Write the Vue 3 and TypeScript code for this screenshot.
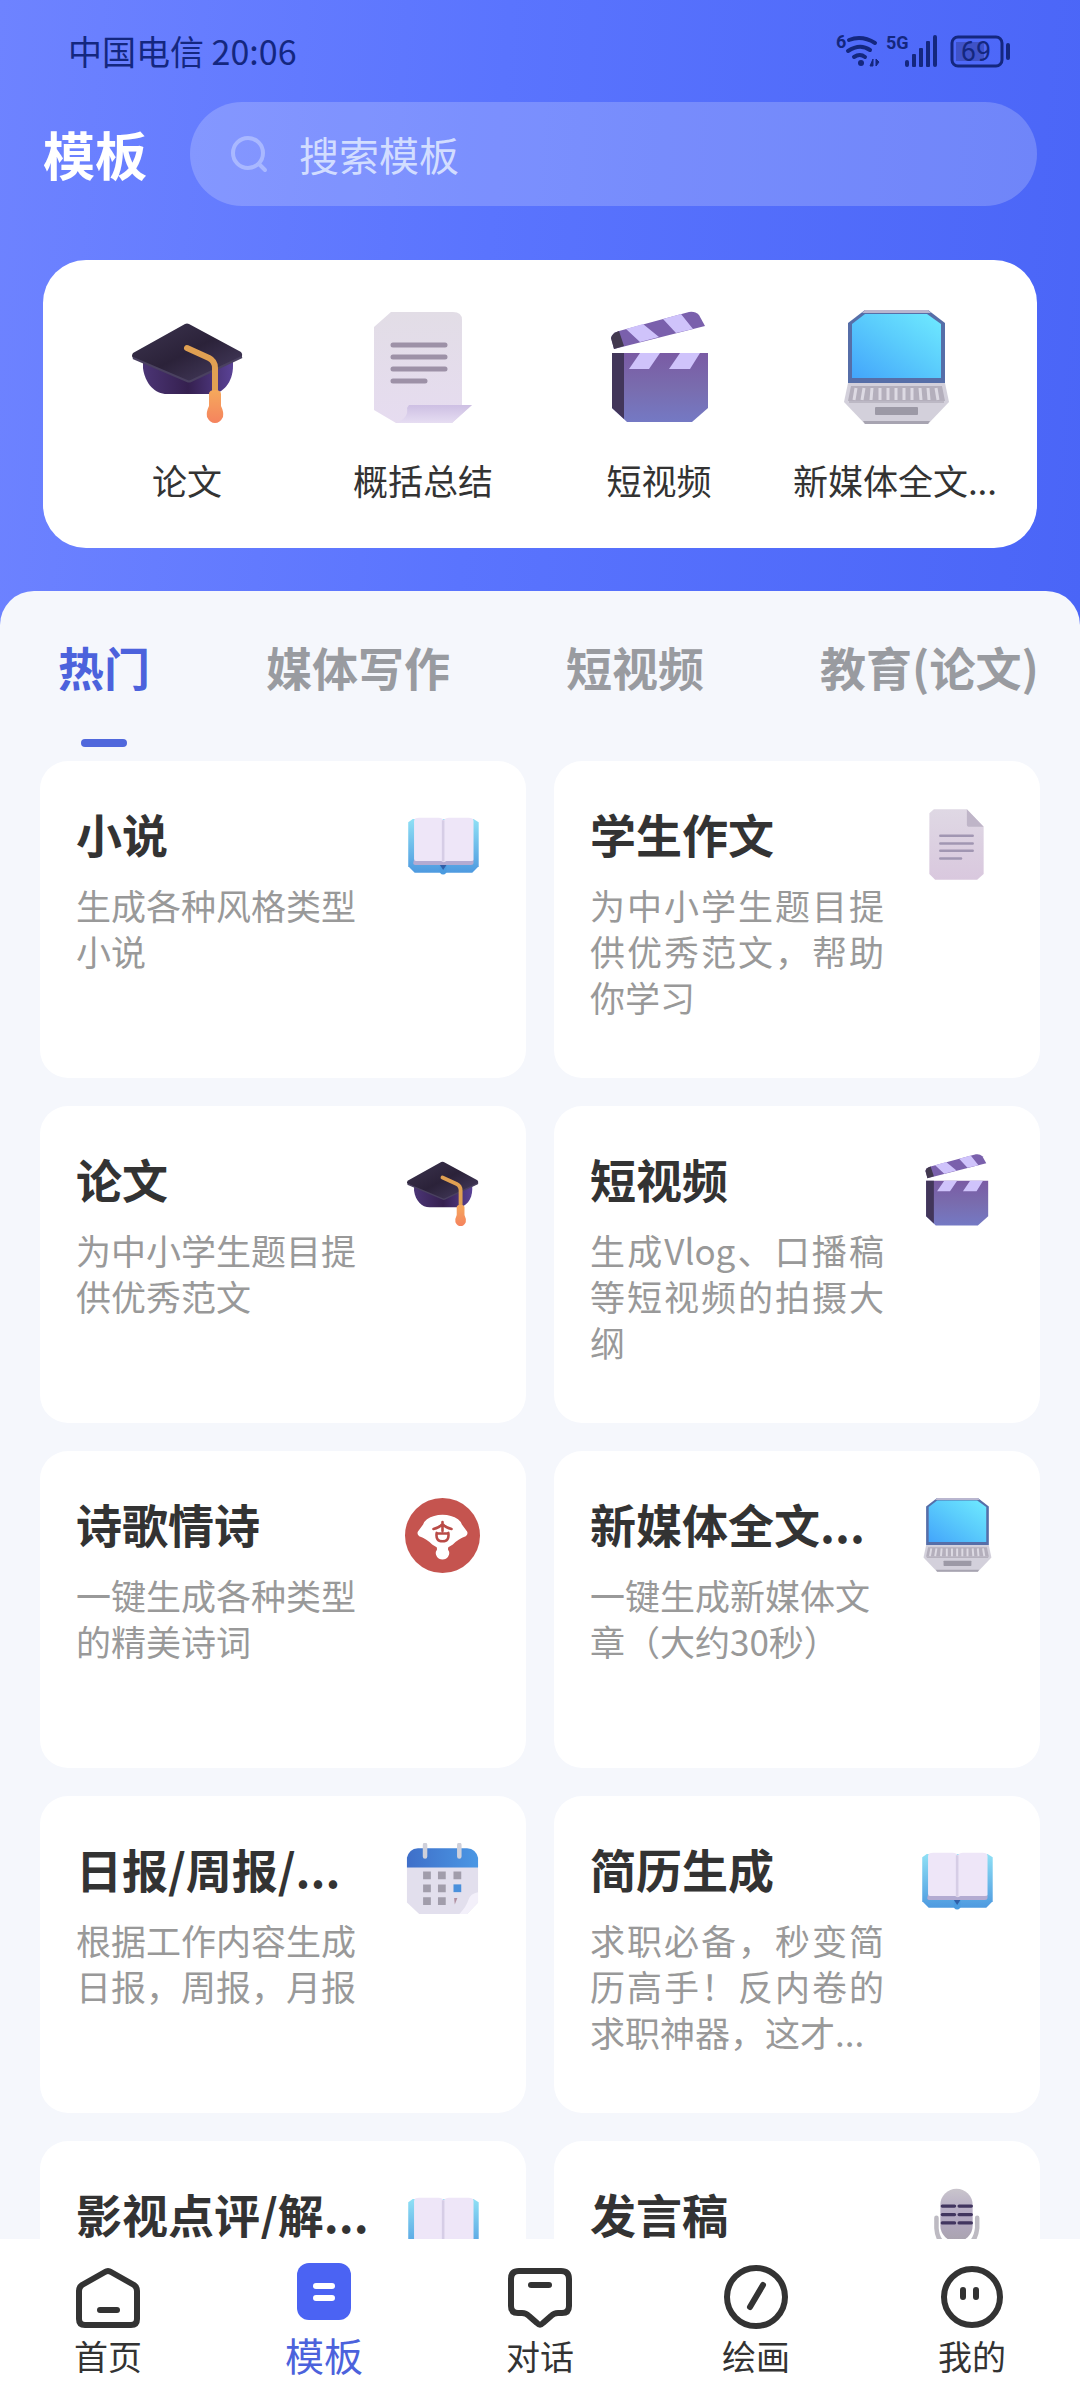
<script setup lang="ts">
import { ref } from 'vue'

interface Shortcut {
  label: string
  icon: string
}

interface Template {
  title: string
  desc: string
  icon: string
  wide?: boolean
}

interface NavItem {
  label: string
  icon: 'home' | 'template' | 'chat' | 'paint' | 'mine'
}

const keyword = ref('')
const activeTab = ref('热门')
const activeNav = ref('模板')

const shortcuts: Shortcut[] = [
  { label: '论文', icon: 'cap' },
  { label: '概括总结', icon: 'scroll' },
  { label: '短视频', icon: 'clapper' },
  { label: '新媒体全文...', icon: 'laptop' },
]

const tabs: string[] = ['热门', '媒体写作', '短视频', '教育(论文)']

const templates: Template[] = [
  { title: '小说', desc: '生成各种风格类型小说', icon: 'book' },
  { title: '学生作文', desc: '为中小学生题目提供优秀范文，帮助你学习', icon: 'doc', wide: true },
  { title: '论文', desc: '为中小学生题目提供优秀范文', icon: 'cap' },
  { title: '短视频', desc: '生成Vlog、口播稿等短视频的拍摄大纲', icon: 'clapper', wide: true },
  { title: '诗歌情诗', desc: '一键生成各种类型的精美诗词', icon: 'fan' },
  { title: '新媒体全文...', desc: '一键生成新媒体文章（大约30秒）', icon: 'laptop' },
  { title: '日报/周报/...', desc: '根据工作内容生成日报，周报，月报', icon: 'calendar' },
  { title: '简历生成', desc: '求职必备，秒变简历高手！反内卷的求职神器，这才...', icon: 'book', wide: true },
  { title: '影视点评/解...', desc: '', icon: 'book' },
  { title: '发言稿', desc: '', icon: 'mic' },
]

const navItems: NavItem[] = [
  { label: '首页', icon: 'home' },
  { label: '模板', icon: 'template' },
  { label: '对话', icon: 'chat' },
  { label: '绘画', icon: 'paint' },
  { label: '我的', icon: 'mine' },
]
</script>

<template>
  <div class="app">
    <svg class="sprite" width="0" height="0" aria-hidden="true">
      <defs>
        <linearGradient id="g-cap" x1="0" y1="0" x2="1" y2="1">
          <stop offset="0" stop-color="#3d3550" />
          <stop offset="0.5" stop-color="#2b2239" />
          <stop offset="1" stop-color="#493f63" />
        </linearGradient>
        <linearGradient id="g-skull" x1="0" y1="0" x2="1" y2="0">
          <stop offset="0" stop-color="#4b3575" />
          <stop offset="0.5" stop-color="#35204f" />
          <stop offset="1" stop-color="#5a4296" />
        </linearGradient>
        <linearGradient id="g-tassel" x1="0" y1="0" x2="0" y2="1">
          <stop offset="0" stop-color="#f5a95c" />
          <stop offset="1" stop-color="#f5835e" />
        </linearGradient>
        <linearGradient id="g-paper" x1="0" y1="0" x2="0" y2="1">
          <stop offset="0" stop-color="#e2dde6" />
          <stop offset="1" stop-color="#e6dcf0" />
        </linearGradient>
        <linearGradient id="g-roll" x1="0" y1="0" x2="0" y2="1">
          <stop offset="0" stop-color="#cdbfe3" />
          <stop offset="1" stop-color="#e6ddf2" />
        </linearGradient>
        <linearGradient id="g-clap" x1="0" y1="0" x2="0" y2="1">
          <stop offset="0" stop-color="#7a5ba4" />
          <stop offset="0.5" stop-color="#796cae" />
          <stop offset="1" stop-color="#7479c4" />
        </linearGradient>
        <linearGradient id="g-screen" x1="0" y1="1" x2="1" y2="0">
          <stop offset="0" stop-color="#43a5fb" />
          <stop offset="0.55" stop-color="#5bcdfc" />
          <stop offset="1" stop-color="#6feaff" />
        </linearGradient>
        <linearGradient id="g-cover" x1="0" y1="0" x2="0" y2="1">
          <stop offset="0" stop-color="#8fe0f5" />
          <stop offset="1" stop-color="#4e9ae0" />
        </linearGradient>
        <linearGradient id="g-doc" x1="0" y1="0" x2="0" y2="1">
          <stop offset="0" stop-color="#dfd8e4" />
          <stop offset="1" stop-color="#d9c8de" />
        </linearGradient>
        <linearGradient id="g-cal" x1="0" y1="0" x2="1" y2="0">
          <stop offset="0" stop-color="#3f6fc9" />
          <stop offset="1" stop-color="#4a97e4" />
        </linearGradient>
        <linearGradient id="g-mic" x1="0" y1="0" x2="0" y2="1">
          <stop offset="0" stop-color="#c9c5cc" />
          <stop offset="0.5" stop-color="#b4a9c4" />
          <stop offset="1" stop-color="#a9a3ae" />
        </linearGradient>
      </defs>

      <symbol id="cap" viewBox="0 0 116 116">
        <path d="M14 50V58C16 74 26 84 38 84H82C94 84 104 72 104 56V48Z" fill="url(#g-skull)" />
        <path d="M56 14Q58 13 60 14L112 42Q114 44 113 47L62 71Q60 72 58 71L4 48Q2 46 4 43Z" fill="url(#g-cap)" />
        <path d="M4 48L58 71Q60 72 62 71L113 47" fill="none" stroke="#4a4160" stroke-width="2" />
        <path d="M58 38L80 48Q86 51 86 58V86" fill="none" stroke="#e0a052" stroke-width="6" stroke-linecap="round" stroke-linejoin="round" />
        <path d="M80 84Q80 80 86 80T92 84V96Q95 102 94 107Q91 113 86 113T78 107Q77 102 80 96Z" fill="url(#g-tassel)" />
      </symbol>

      <symbol id="scroll" viewBox="0 0 116 116">
        <path d="M26 2H88Q97 2 97 10V95H107L87 113H31L9 100V17Z" fill="url(#g-paper)" />
        <path d="M44 95H107L87 113H31Q44 108 42 98Z" fill="url(#g-roll)" />
        <path d="M28 35H80M28 47H80M28 59H80M28 71H60" stroke="#9d91a7" stroke-width="5" stroke-linecap="round" />
      </symbol>

      <symbol id="clapper" viewBox="0 0 116 116">
        <path d="M10 28Q11 23 18 21L88 2Q94 1 98 5L104 16L13 39Z" fill="#7a60ac" />
        <path d="M10 28Q11 23 18 21L23 36L13 39Z" fill="#42394f" />
        <path d="M25 19L42 14L58 27L39 32ZM62 9L80 4L92 19L75 23Z" fill="#cfc3fb" />
        <path d="M11 43H107V98L91 112H26L11 98Z" fill="url(#g-clap)" />
        <path d="M11 43H23V109L11 98Z" fill="#42365a" />
        <path d="M39 43H59L48 59H28ZM79 43H99L89 59H68Z" fill="#cfc3fb" />
      </symbol>

      <symbol id="laptop" viewBox="0 0 116 116">
        <path d="M28 0H91L108 13V73H11V13Z" fill="#566ea8" />
        <path d="M28 0H91L94 3H25Z" fill="#b9b6cf" />
        <path d="M28 4H90L104 14V68H15V14Z" fill="url(#g-screen)" />
        <path d="M11 73H108L112 92L91 114H28L7 92Z" fill="#d3d0db" />
        <path d="M14 76H105L108 91H11Z" fill="#b4afbc" />
        <path d="M19 78L17 90M27 78L25 90M35 78L34 90M43 78V90M51 78V90M59 78V90M67 78V90M75 78V90M83 78L84 90M91 78L92 90M99 78L101 90" stroke="#dddae3" stroke-width="3" />
        <path d="M12 92H107" stroke="#a5a0ae" stroke-width="1" />
        <rect x="38" y="97" width="43" height="8" rx="1" fill="#9c99a6" />
        <path d="M26 111H93L91 114H28Z" fill="#a7a4b1" />
      </symbol>

      <symbol id="book" viewBox="0 0 116 116">
        <path d="M5 22L12 17H106L114 22V90L104 100H15L5 90Z" fill="url(#g-cover)" />
        <path d="M14 80H106V85Q106 88 102 88H64L59 91L54 88H16Q12 88 13 84Z" fill="#b3abd2" />
        <path d="M14 20Q14 15 22 15H52Q58 15 60 19Q62 15 68 15H98Q106 15 106 20V80Q106 82 102 82H64L60 84L56 82H17Q14 82 14 79Z" fill="#eee6f8" />
        <path d="M59 19V83" stroke="#d6cde6" stroke-width="4" />
        <path d="M54 88H64V100Q59 106 54 100Z" fill="#4a9be0" />
        <path d="M54 88H64L59 96Z" fill="#2f5fa8" />
      </symbol>

      <symbol id="doc" viewBox="0 0 116 116">
        <path d="M23 2H74L100 29V102L90 111H25L16 102V8Z" fill="url(#g-doc)" />
        <path d="M74 2L100 29H78Q74 29 74 25Z" fill="#bfb5c8" />
        <path d="M33 43H83M33 55H83M33 66H83M33 78H65" stroke="#a196b2" stroke-width="4" stroke-linecap="round" />
      </symbol>

      <symbol id="fan" viewBox="0 0 116 116">
        <circle cx="58" cy="58" r="58" fill="#c5544f" />
        <path d="M58 26Q72 26 82 33Q86 36 88 41L96 52Q98 56 94 59Q82 63 74 72Q70 75 67 76Q66 79 67 81Q70 85 67 90Q64 95 58 95T49 90Q46 85 49 81Q50 79 49 76Q46 75 42 72Q34 63 22 59Q18 56 20 52L28 41Q30 36 34 33Q44 26 58 26Z" fill="#fff" />
        <path d="M58 37V51M44 48Q53 46 58 40Q63 46 72 48M49 54Q47 67 58 67T67 54M50 55H66" fill="none" stroke="#b94b47" stroke-width="4" stroke-linecap="round" />
      </symbol>

      <symbol id="calendar" viewBox="0 0 116 116">
        <path d="M3 32H113V92L96 110H22L3 92Z" fill="#e2dfed" />
        <path d="M96 110L113 92V76Q101 78 98 88T84 110Z" fill="#f3f0fa" />
        <path d="M3 38V23Q6 9 20 8H96Q110 9 113 23V38Z" fill="url(#g-cal)" />
        <path d="M31 3V21M84 3V21" stroke="#cfd0da" stroke-width="7" stroke-linecap="round" />
        <path d="M28 44H40V56H28ZM51 44H63V56H51ZM75 44H87V56H75ZM28 64H40V76H28ZM51 64H63V76H51ZM28 84H40V96H28ZM51 84H63V96H51Z" fill="#a19dab" />
        <path d="M75 64H87V76H75Z" fill="#4a90dc" />
        <path d="M76 85H81L77 95Z" fill="#b08fa0" />
      </symbol>

      <symbol id="mic" viewBox="0 0 116 116">
        <path d="M27 46V62Q29 92 58 92T90 62V46" fill="none" stroke="#bdbac2" stroke-width="7" stroke-linecap="round" />
        <path d="M58 92V112M38 113H78" stroke="#a9a3ae" stroke-width="7" />
        <rect x="33" y="1" width="50" height="82" rx="25" fill="url(#g-mic)" />
        <path d="M36 28H55M62 28H81M36 41H55M62 41H81M36 54H55M62 54H81" stroke="#41355f" stroke-width="5" stroke-linecap="round" />
      </symbol>
    </svg>

    <header class="top">
      <div class="status">
        <span>中国电信 20:06</span>
        <svg class="status-icons" viewBox="0 0 178 36" aria-hidden="true">
          <g fill="none" stroke="#14277f" stroke-linecap="round" stroke-width="4">
            <path d="M15 7Q28 2 41 10" />
            <path d="M14 18Q26 10 36 17" />
            <path d="M20 24Q26 20 31 24" />
          </g>
          <circle cx="27" cy="30" r="3" fill="#14277f" />
          <path d="M39 26V33H36ZM42 33V26L45 29Z" fill="#14277f" stroke="#14277f" stroke-width="1" />
          <text x="2" y="15" class="tiny">6</text>
          <text x="52" y="16" class="tiny">5G</text>
          <g fill="#14277f">
            <rect x="71" y="27" width="4" height="7" rx="2" />
            <rect x="78" y="21" width="4" height="13" rx="1" />
            <rect x="85" y="15" width="4" height="19" rx="1" />
            <rect x="92" y="8" width="4" height="26" rx="1" />
            <rect x="99" y="2" width="4" height="32" rx="2" />
          </g>
          <rect x="122" y="9" width="28" height="19" fill="#3f52c8" />
          <rect x="118" y="4" width="50" height="29" rx="6" fill="none" stroke="#14277f" stroke-width="3" />
          <rect x="172" y="10" width="4" height="17" rx="2" fill="#14277f" />
          <text x="142" y="28" text-anchor="middle" class="level">69</text>
        </svg>
      </div>

      <div class="search-row">
        <h1>模板</h1>
        <label class="search">
          <svg width="38" height="38" viewBox="0 0 38 38" fill="none" stroke="#a9b8ff" stroke-width="4" stroke-linecap="round" aria-hidden="true">
            <circle cx="18" cy="18" r="15" />
            <path d="M29 29L35 35" />
          </svg>
          <input v-model="keyword" type="search" placeholder="搜索模板" aria-label="搜索模板" />
        </label>
      </div>

      <nav class="shortcuts">
        <button v-for="s in shortcuts" :key="s.label" type="button" class="shortcut">
          <svg class="pic-lg" aria-hidden="true"><use :href="'#' + s.icon" /></svg>
          <span>{{ s.label }}</span>
        </button>
      </nav>
    </header>

    <main class="sheet">
      <div class="tabs" role="tablist">
        <button
          v-for="t in tabs"
          :key="t"
          type="button"
          role="tab"
          class="tab"
          :class="{ active: t === activeTab }"
          :aria-selected="t === activeTab"
          @click="activeTab = t"
        >
          {{ t }}
        </button>
      </div>

      <div class="grid">
        <article v-for="c in templates" :key="c.title" class="card">
          <div class="card-text">
            <h2>{{ c.title }}</h2>
            <p :class="{ spread: c.wide }">{{ c.desc }}</p>
          </div>
          <svg class="pic-sm" aria-hidden="true"><use :href="'#' + c.icon" /></svg>
        </article>
      </div>
    </main>

    <nav class="bottom">
      <a
        v-for="n in navItems"
        :key="n.label"
        href="#"
        class="nav-item"
        :class="{ active: n.label === activeNav }"
        @click.prevent="activeNav = n.label"
      >
        <svg width="64" height="64" viewBox="0 0 64 64" fill="none" stroke="#333" stroke-width="6" stroke-linecap="round" stroke-linejoin="round" aria-hidden="true">
          <template v-if="n.icon === 'home'">
            <path d="M29 7Q32 5 35 7L58 20Q61 22 61 26V54Q61 60 55 60H9Q3 60 3 54V26Q3 22 6 20Z" />
            <path d="M24 45H41" />
          </template>
          <template v-else-if="n.icon === 'template'">
            <rect x="5" y="-2" width="54" height="57" rx="12" fill="#4b63f3" stroke="none" />
            <path d="M24 21H40M24 33H40" stroke="#fff" />
          </template>
          <template v-else-if="n.icon === 'chat'">
            <path d="M11 6H53Q61 6 61 14V41Q61 48 54 48H50Q46 48 43 51L35 58Q32 61 29 58L21 51Q18 48 14 48H10Q3 48 3 41V14Q3 6 11 6Z" />
            <path d="M23 20H41" />
          </template>
          <template v-else-if="n.icon === 'paint'">
            <circle cx="32" cy="32" r="29" />
            <path d="M26 42L39 20" />
          </template>
          <template v-else>
            <circle cx="32" cy="32" r="28" />
            <path d="M23 25V32M36 25V32" />
          </template>
        </svg>
        <span>{{ n.label }}</span>
      </a>
    </nav>
  </div>
</template>

<style>
body {
  margin: 0;
  background: #f5f7fc;
}
</style>

<style scoped>
* {
  box-sizing: border-box;
}

.app {
  display: flex;
  flex-direction: column;
  height: 100vh;
  overflow: hidden;
  font-family: "Noto Sans CJK SC", "Noto Sans", sans-serif;
  color: #333;
}

.sprite {
  position: absolute;
}

button {
  border: 0;
  padding: 0;
  background: none;
  font: inherit;
  color: inherit;
}

.top {
  flex: none;
  padding: 0 43px 77px;
  background: linear-gradient(95deg, #6e83ff 0%, #5a74fe 45%, #4a65f7 100%);
}

.status {
  display: flex;
  align-items: center;
  justify-content: space-between;
  height: 102px;
  padding: 0 25px;
  font-size: 34px;
  line-height: 48px;
  color: #14277f;
}

.status-icons {
  width: 178px;
  height: 36px;
  overflow: visible;
}

.tiny {
  font-family: Roboto, sans-serif;
  font-size: 18px;
  font-weight: 700;
  fill: #14277f;
}

.level {
  font-family: Roboto, sans-serif;
  font-size: 27px;
  fill: #14277f;
}

.search-row {
  display: flex;
  align-items: center;
  gap: 43px;
}

h1 {
  margin: 0;
  font-size: 52px;
  line-height: 72px;
  font-weight: 700;
  color: #fff;
}

.search {
  flex: 1;
  display: flex;
  align-items: center;
  gap: 31px;
  height: 104px;
  padding: 0 40px;
  border-radius: 52px;
  background: rgba(255, 255, 255, 0.2);
}

.search svg {
  flex: none;
}

.search input {
  flex: 1;
  min-width: 0;
  border: 0;
  padding: 0;
  outline: none;
  appearance: none;
  background: transparent;
  font-family: inherit;
  font-size: 40px;
  line-height: 56px;
  color: #fff;
}

.search input::placeholder {
  color: #d2ddff;
  opacity: 1;
}

.shortcuts {
  display: grid;
  grid-template-columns: repeat(4, 1fr);
  margin-top: 54px;
  padding: 50px 24px 42px 26px;
  border-radius: 43px;
  background: #fff;
}

.shortcut {
  display: flex;
  flex-direction: column;
  align-items: center;
  gap: 28px;
  font-size: 35px;
  line-height: 52px;
  white-space: nowrap;
}

.pic-lg {
  width: 116px;
  height: 116px;
}

.sheet {
  flex: 1;
  min-height: 0;
  overflow: hidden;
  margin-top: -34px;
  border-radius: 34px 34px 0 0;
  background: #f5f7fc;
}

.tabs {
  display: flex;
  gap: 116px;
  height: 170px;
  padding: 43px 0 14px 58px;
  overflow: hidden;
}

.tab {
  display: flex;
  flex-direction: column;
  align-items: center;
  justify-content: space-between;
  flex: none;
  font-size: 46px;
  line-height: 64px;
  font-weight: 700;
  color: #999ba0;
}

.tab.active {
  color: #4c62dc;
}

.tab.active::after {
  content: "";
  width: 46px;
  height: 8px;
  border-radius: 4px;
  background: #5068dc;
}

.grid {
  display: grid;
  grid-template-columns: repeat(2, 1fr);
  gap: 28px;
  padding: 0 40px;
}

.card {
  display: flex;
  align-items: flex-start;
  gap: 35px;
  min-height: 317px;
  padding: 47px 46px 40px 36px;
  border-radius: 28px;
  background: #fff;
}

.card-text {
  flex: 1;
  min-width: 0;
}

h2 {
  margin: 0 0 24px;
  font-size: 46px;
  line-height: 50px;
  font-weight: 700;
  white-space: nowrap;
}

p {
  margin: 0;
  font-size: 35px;
  line-height: 46px;
  color: #999;
}

.spread {
  text-align: justify;
}

.pic-sm {
  flex: none;
  width: 75px;
  height: 75px;
}

.bottom {
  flex: none;
  display: grid;
  grid-template-columns: repeat(5, 1fr);
  height: 161px;
  padding-top: 26px;
  background: #fff;
}

.nav-item {
  display: flex;
  flex-direction: column;
  align-items: center;
  gap: 5px;
  font-size: 34px;
  line-height: 44px;
  color: #333;
  text-decoration: none;
}

.nav-item svg {
  flex: none;
  overflow: visible;
}

.nav-item.active {
  font-size: 39px;
  line-height: 40px;
  color: #4c62dc;
}
</style>
